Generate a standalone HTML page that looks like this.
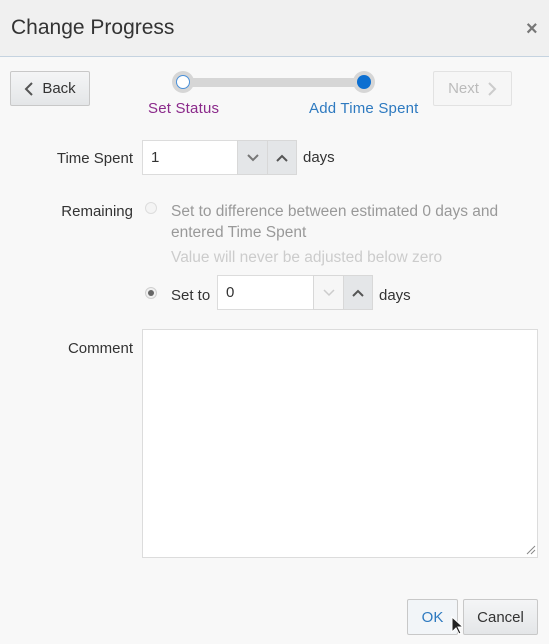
<!DOCTYPE html>
<html><head><style>
*{box-sizing:border-box;margin:0;padding:0}
body{width:549px;height:644px;background:#f8f8f8;font-family:"Liberation Sans",sans-serif;font-size:15px;color:#333;position:relative;overflow:hidden}
.a{position:absolute}
.hdr{left:0;top:0;width:549px;height:57px;background:#f0f0f0;border-bottom:1px solid #c5d3e0}
.btn{border:1px solid #c8c8c8;border-radius:2px;background:linear-gradient(#f4f5f6,#e4e6e8);display:flex;align-items:center;justify-content:center}
.inp{background:#fff;border:1px solid #dcdcdc;padding-left:8px;display:flex;align-items:center}
.sp{background:#e4e6e8;border:1px solid #d8d8d8;display:flex;align-items:center;justify-content:center}
.lbl{text-align:right;width:133px;left:0}
.radio{width:12px;height:12px;border-radius:50%;border:1px solid #d0d0d0;background:#f0f0f0}
</style></head><body>
<div class="a hdr"></div>
<div class="a" style="left:11px;top:16px;font-size:21px;color:#333">Change Progress</div>
<div class="a" style="left:526px;top:18px;font-size:20px;color:#777;font-weight:bold">×</div>

<div class="a btn" style="left:10px;top:71px;width:80px;height:35px;gap:8px;color:#333;font-size:15px">
<svg width="10" height="14" viewBox="0 0 10 14"><path d="M8 1L2 7l6 6" stroke="#555" stroke-width="2" fill="none"/></svg>Back</div>
<div class="a btn" style="left:433px;top:71px;width:79px;height:35px;gap:8px;color:#bbb;font-size:15px;background:#f6f6f6;border-color:#e2e2e2">Next<svg width="10" height="14" viewBox="0 0 10 14"><path d="M2 1l6 6-6 6" stroke="#ccc" stroke-width="2" fill="none"/></svg></div>

<div class="a" style="left:183px;top:78px;width:181px;height:9px;background:#d6d6d6"></div>
<div class="a" style="left:172px;top:71px;width:22px;height:22px;border-radius:50%;background:#d6d6d6"></div>
<div class="a" style="left:176px;top:75px;width:14px;height:14px;border-radius:50%;background:#fff;border:1.5px solid #4a90d9"></div>
<div class="a" style="left:353px;top:71px;width:22px;height:22px;border-radius:50%;background:#d6d6d6"></div>
<div class="a" style="left:357px;top:75px;width:14px;height:14px;border-radius:50%;background:#0c6fd1"></div>
<div class="a" style="left:148px;top:100px;color:#8b2a8b;font-size:15px;letter-spacing:0.2px">Set Status</div>
<div class="a" style="left:309px;top:100px;color:#2e7ac0;font-size:15px;letter-spacing:0.2px">Add Time Spent</div>

<div class="a lbl" style="top:150px">Time Spent</div>
<div class="a inp" style="left:142px;top:140px;width:96px;height:35px">1</div>
<div class="a sp" style="left:237px;top:140px;width:31px;height:35px"><svg width="12" height="8"><path d="M1 1l5 5 5-5" stroke="#777" stroke-width="2" fill="none"/></svg></div>
<div class="a sp" style="left:267px;top:140px;width:30px;height:35px"><svg width="12" height="8"><path d="M1 7l5-5 5 5" stroke="#555" stroke-width="2" fill="none"/></svg></div>
<div class="a" style="left:303px;top:149px;font-size:15px">days</div>

<div class="a lbl" style="top:203px">Remaining</div>
<div class="a radio" style="left:145px;top:202px;background:#f4f4f4;border-color:#ddd"></div>
<div class="a" style="left:171px;top:201px;color:#999;line-height:21px;width:370px;font-size:15.5px">Set to difference between estimated 0 days and<br>entered Time Spent</div>
<div class="a" style="left:171px;top:249px;color:#ccc;font-size:15.5px">Value will never be adjusted below zero</div>
<div class="a radio" style="left:145px;top:287px;display:flex;align-items:center;justify-content:center"><div style="width:6px;height:6px;border-radius:50%;background:#666"></div></div>
<div class="a" style="left:171px;top:287px;font-size:15px">Set to</div>
<div class="a inp" style="left:217px;top:275px;width:97px;height:35px">0</div>
<div class="a sp" style="left:313px;top:275px;width:31px;height:35px;background:#f6f6f6"><svg width="12" height="8"><path d="M1 1l5 5 5-5" stroke="#ccc" stroke-width="1.5" fill="none"/></svg></div>
<div class="a sp" style="left:343px;top:275px;width:30px;height:35px"><svg width="12" height="8"><path d="M1 7l5-5 5 5" stroke="#555" stroke-width="2" fill="none"/></svg></div>
<div class="a" style="left:379px;top:287px;font-size:15px">days</div>

<div class="a lbl" style="top:340px">Comment</div>
<div class="a" style="left:142px;top:329px;width:396px;height:229px;background:#fff;border:1px solid #dcdcdc"></div>
<svg class="a" style="left:526px;top:545px" width="10" height="10"><path d="M1 9L9 1M5 9L9 5" stroke="#888"/></svg>

<div class="a btn" style="left:407px;top:599px;width:51px;height:36px;color:#2e7ac0;font-size:15px;background:#f2f5f8">OK</div>
<div class="a btn" style="left:463px;top:599px;width:75px;height:36px;color:#333;font-size:15px">Cancel</div>
<svg class="a" style="left:451px;top:616px" width="12" height="20"><path d="M1 1v15l4-4 3 6 2-1-3-6h5z" fill="#222" stroke="#fff" stroke-width="1"/></svg>
</body></html>
